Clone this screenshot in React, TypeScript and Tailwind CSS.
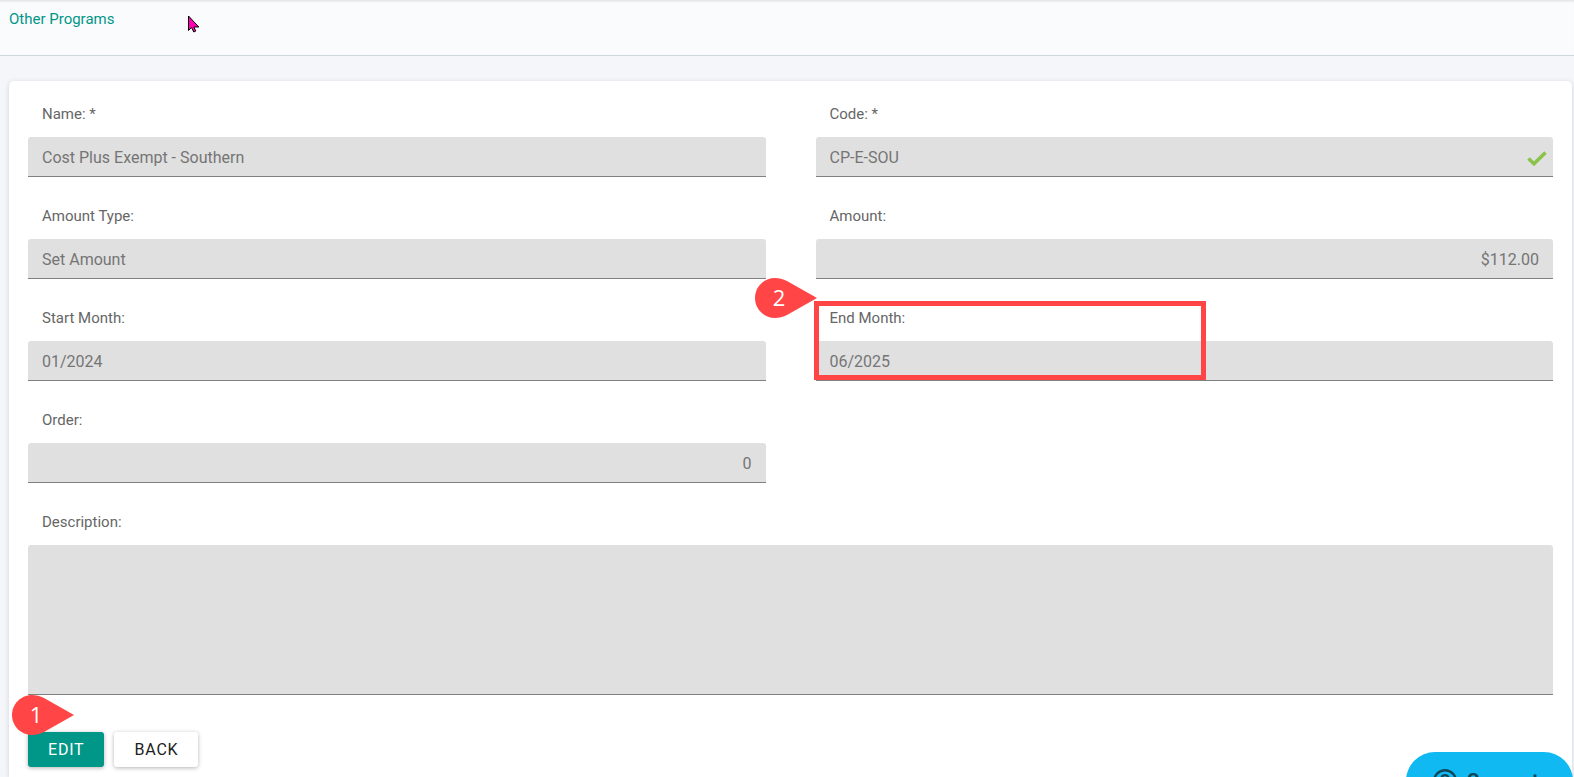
import React from "react";

type FieldProps = {
  id: string;
  label: string;
  value: string;
  alignRight?: boolean;
  children?: React.ReactNode;
};

function Field({ id, label, value, alignRight = false, children }: FieldProps) {
  return (
    <div className="relative flex flex-col">
      <label htmlFor={id} className="mb-[13px] px-[14px] text-[15px] leading-5 text-[#666666]">
        {label}
      </label>
      <input
        id={id}
        type="text"
        readOnly
        defaultValue={value}
        className={
          "h-10 w-full rounded-t-[3px] border-b border-[#808080] bg-[#e0e0e0] px-[14px] pt-0.5 text-base text-[#757575] outline-none " +
          (alignRight ? "text-right" : "text-left")
        }
      />
      {children}
    </div>
  );
}

function Pin({ number }: { number: string }) {
  return (
    <svg viewBox="0 0 62 40" className="h-10 w-[62px]" aria-hidden="true">
      <path
        d="M20 0C9 0 0 9 0 20s9 20 20 20c4 0 8-1 12-3L62 20 32 3C28 1 24 0 20 0Z"
        fill="#ff4545"
      />
      <text x="24" y="28" textAnchor="middle" fontSize="22" fill="#ffffff" fontFamily="Open Sans, sans-serif">
        {number}
      </text>
    </svg>
  );
}

export default function App() {
  return (
    <div className="relative flex h-screen flex-col overflow-hidden bg-[#f5f6fa] font-['Roboto',sans-serif]">
      <header className="h-14 shrink-0 border-b border-[#cfd8dc] bg-[#fafbfd] px-[9px] pt-[9px] shadow-[inset_0_3px_3px_-2px_rgba(0,0,0,0.12)]">
        <a href="#other-programs" className="block w-fit text-[15px] leading-5 text-[#009688]">
          Other Programs
        </a>
      </header>

      <svg viewBox="0 0 13 19" className="absolute top-[15px] left-[187px] h-[19px] w-[13px]" aria-hidden="true">
        <path d="M1.5 1v14.5l3-3 2.3 4.5 2-1-2-4h5Z" fill="#ff00b4" stroke="#000" />
      </svg>

      <main className="mt-[25px] mr-0.5 ml-[9px] grow rounded-t-[5px] bg-white px-[19px] pt-[23px] shadow-[0_1px_5px_rgba(60,60,90,0.18)]">
        <form>
          <div className="grid grid-cols-2 gap-x-[50px] gap-y-[29px]">
            <Field id="name" label="Name: *" value="Cost Plus Exempt - Southern" />
            <Field id="code" label="Code: *" value="CP-E-SOU">
              <svg viewBox="0 0 20 15" className="absolute right-[6px] bottom-[11px] h-[15px] w-5" aria-hidden="true">
                <path d="M1.5 7.5l5.5 5.2L18.5 1.5" fill="none" stroke="#8bc34a" strokeWidth="3.6" />
              </svg>
            </Field>
            <Field id="amount-type" label="Amount Type:" value="Set Amount" />
            <Field id="amount" label="Amount:" value="$112.00" alignRight />
            <Field id="start-month" label="Start Month:" value="01/2024" />
            <Field id="end-month" label="End Month:" value="06/2025">
              <div className="absolute -top-[7px] -left-0.5 h-[79px] w-[392px] border-[5px] border-[#ff4545]" />
              <div className="absolute -top-[30px] -left-[61px]">
                <Pin number="2" />
              </div>
            </Field>
            <Field id="order" label="Order:" value="0" alignRight />
            <div className="col-span-2 flex flex-col">
              <label htmlFor="description" className="mb-[13px] px-[14px] text-[15px] leading-5 text-[#666666]">
                Description:
              </label>
              <textarea
                id="description"
                readOnly
                className="h-[150px] w-full resize-none rounded-t-[3px] border-b border-[#808080] bg-[#e0e0e0] p-3 text-base text-[#757575] outline-none"
              />
            </div>
          </div>

          <div className="relative mt-[37px] flex gap-[10px]">
            <button
              type="button"
              className="h-[35px] rounded-[3px] bg-[#009688] px-5 text-base tracking-wider text-white shadow-[0_1px_4px_rgba(0,0,0,0.3)]"
            >
              EDIT
            </button>
            <button
              type="button"
              className="h-[35px] rounded-[3px] bg-white px-5 text-base tracking-wider text-[#212121] shadow-[0_1px_4px_rgba(0,0,0,0.3)]"
            >
              BACK
            </button>
            <div className="absolute -top-[37px] -left-4">
              <Pin number="1" />
            </div>
          </div>
        </form>
      </main>

      <button
        type="button"
        className="absolute right-px -bottom-[33px] flex h-[58px] w-[167px] items-center gap-[10px] rounded-full bg-[#11b9f3] pl-[27px] text-[20px] font-bold text-[#12475a]"
      >
        <svg viewBox="0 0 24 24" className="size-6" fill="none" stroke="currentColor" strokeWidth="2.4" aria-hidden="true">
          <circle cx="12" cy="12" r="10.8" />
          <path d="M8.5 9.8c0-5 7-4.6 7-.6 0 2.6-3.5 2.8-3.5 5.3M12 16.5v2.2" />
        </svg>
        Support
      </button>
    </div>
  );
}
